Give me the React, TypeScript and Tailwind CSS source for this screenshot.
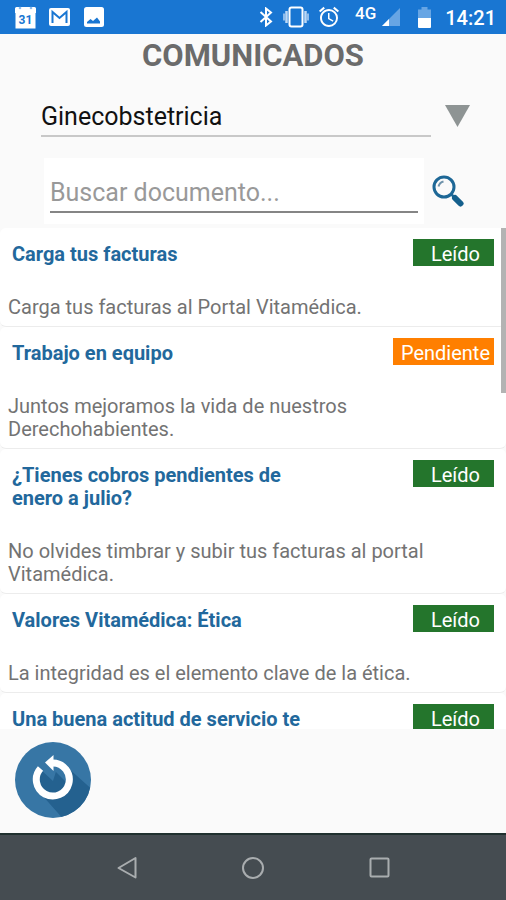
import { useState } from "react";
import { MdAlarm } from "react-icons/md";

type Status = "Leído" | "Pendiente";

type Notice = {
  title: string;
  body?: string;
  status: Status;
};

const notices: Notice[] = [
  {
    title: "Carga tus facturas",
    body: "Carga tus facturas al Portal Vitamédica.",
    status: "Leído",
  },
  {
    title: "Trabajo en equipo",
    body: "Juntos mejoramos la vida de nuestros Derechohabientes.",
    status: "Pendiente",
  },
  {
    title: "¿Tienes cobros pendientes de enero a julio?",
    body: "No olvides timbrar y subir tus facturas al portal Vitamédica.",
    status: "Leído",
  },
  {
    title: "Valores Vitamédica: Ética",
    body: "La integridad es el elemento clave de la ética.",
    status: "Leído",
  },
  { title: "Una buena actitud de servicio te", status: "Leído" },
];

const badgeColor: Record<Status, string> = {
  Leído: "bg-[#24752c]",
  Pendiente: "bg-[#ff7f00]",
};

function StatusBar() {
  return (
    <div className="flex h-[34px] shrink-0 items-center justify-between bg-[#1976d2] pr-2.5 pl-3.5 text-white">
      <div className="flex items-center gap-3">
        <svg viewBox="0 0 23 24" className="h-6 w-[23px]" aria-hidden="true">
          <path d="M1 3.500Q1 2 2.500 2H20.500Q22 2 22 3.500V8H21.500V23.500H1.500V8H1Z" fill="#fff" />
          <circle cx="6" cy="3" r="1.300" fill="#8fbdec" />
          <circle cx="17" cy="3" r="1.300" fill="#8fbdec" />
          <text x="11.500" y="18.500" textAnchor="middle" fontSize="12" fontWeight="700" fill="#1976d2">
            31
          </text>
        </svg>
        <svg viewBox="0 0 21 18" className="h-[18px] w-[21px]" aria-hidden="true">
          <rect width="21" height="18" rx="2" fill="#fff" />
          <path d="M3.500 15V4L10.500 10L17.500 4V15" fill="none" stroke="#1976d2" strokeWidth="2" />
        </svg>
        <svg viewBox="0 0 20 20" className="ml-0.5 size-5" aria-hidden="true">
          <rect width="20" height="20" rx="2.500" fill="#fff" />
          <path d="M3 16.500V15L6.500 12L9 14L13 10.500L16 14.500V16.500Z" fill="#1976d2" />
        </svg>
      </div>

      <div className="flex items-center">
        <svg viewBox="0 0 14 20" className="h-5 w-3.5" fill="none" stroke="#fff" strokeWidth="2" aria-hidden="true">
          <path d="M1.500 5L12 14.500L7 18.500V1.500L12 5.500L1.500 15" />
        </svg>
        <svg viewBox="0 0 26 22" className="ml-2.5 h-[22px] w-[26px]" aria-hidden="true">
          <rect x="6.500" y="1.500" width="13" height="19" rx="2" fill="none" stroke="#fff" strokeWidth="2" />
          <path d="M3.500 5V17M22.500 5V17" stroke="#bcd8f5" strokeWidth="2.500" />
          <path d="M1 7.500V14.500M25 7.500V14.500" stroke="#8fbdec" strokeWidth="2" />
        </svg>
        <MdAlarm className="ml-2 size-6" aria-hidden="true" />
        <span className="mb-2 ml-3.5 text-[17px] leading-4 font-medium">4G</span>
        <svg viewBox="0 0 18 18" className="ml-1.5 h-[18px] w-[18px]" aria-hidden="true">
          <path d="M18 0V18H0Z" fill="#67a5e4" />
          <path d="M7 11V18H0Z" fill="#fff" />
        </svg>
        <svg viewBox="0 0 13 21" className="ml-[18px] h-[21px] w-[13px]" aria-hidden="true">
          <path d="M3.500 0H9.500V2.500H13V11H0V2.500H3.500Z" fill="#67a5e4" />
          <path d="M0 11H13V20Q13 21 12 21H1Q0 21 0 20Z" fill="#fff" />
        </svg>
        <time className="mt-0.5 ml-3.5 text-xl leading-6 font-medium">14:21</time>
      </div>
    </div>
  );
}

function NoticeCard({ notice }: { notice: Notice }) {
  return (
    <li className="rounded-md border-b border-[#ececec] bg-white px-2 pt-[11px] pb-[7px]">
      <div className="flex items-start justify-between pr-1 pl-1">
        <h2 className="w-3/5 pt-1 text-xl leading-[23px] font-bold text-[#22689c]">
          {notice.title}
        </h2>
        <span
          className={`min-w-[81px] pt-[3px] pr-1 pl-2 text-center text-xl leading-6 text-white ${badgeColor[notice.status]}`}
        >
          {notice.status}
        </span>
      </div>
      <p className="mt-[30px] min-h-[23px] text-xl leading-[23px] text-[#737373]">{notice.body}</p>
    </li>
  );
}

function NavBar() {
  return (
    <nav className="flex h-[67px] shrink-0 items-center justify-center gap-[102px] border-t-2 border-[#20302f] bg-[#454c51]">
      <button type="button" aria-label="Atrás">
        <svg viewBox="0 0 24 24" className="size-6" fill="none" stroke="#a9adaf" strokeWidth="2" strokeLinejoin="round">
          <path d="M20.500 2V21.500L3.500 12Z" />
        </svg>
      </button>
      <button type="button" aria-label="Inicio">
        <svg viewBox="0 0 24 24" className="size-6" fill="none" stroke="#a9adaf" strokeWidth="2">
          <circle cx="12" cy="12" r="10" />
        </svg>
      </button>
      <button type="button" aria-label="Recientes">
        <svg viewBox="0 0 24 24" className="size-6" fill="none" stroke="#a9adaf" strokeWidth="2">
          <rect x="3.500" y="2.500" width="18" height="18" rx="1" />
        </svg>
      </button>
    </nav>
  );
}

export default function App() {
  const [query, setQuery] = useState("");

  return (
    <div className="flex h-screen flex-col bg-[#fafafa] font-[Roboto,sans-serif]">
      <StatusBar />

      <header className="shrink-0 pb-1">
        <h1 className="pt-1 text-center text-[31px] leading-9 font-bold text-[#6b6b6b]">COMUNICADOS</h1>

        <div className="mt-5 flex items-center pr-9 pl-[41px]">
          <select
            aria-label="Especialidad"
            className="h-[43px] min-w-0 flex-1 appearance-none border-b-2 border-[#c8c8c8] pt-1 text-[25px] leading-8 text-[#111111] outline-none"
          >
            <option>Ginecobstetricia</option>
          </select>
          <svg viewBox="0 0 25 22" className="ml-3.5 h-[22px] w-[25px]" aria-hidden="true">
            <path d="M0 0H25L12.500 22Z" fill="#8e9494" />
          </svg>
        </div>

        <form
          className="mt-[21px] flex items-center pr-[42px] pl-11"
          onSubmit={(e) => e.preventDefault()}
        >
          <div className="min-w-0 flex-1 bg-white px-1.5 pt-3 pb-[11px]">
            <input
              type="text"
              aria-label="Buscar documento"
              placeholder="Buscar documento..."
              value={query}
              onChange={(e) => setQuery(e.target.value)}
              className="h-[43px] w-full border-b-2 border-[#858585] pt-1 text-[25px] leading-8 text-[#111111] outline-none placeholder:text-[#999999]"
            />
          </div>
          <button type="submit" aria-label="Buscar" className="ml-2">
            <svg viewBox="0 0 32 32" className="size-8" fill="none">
              <circle cx="12" cy="12" r="10" stroke="#1d6796" strokeWidth="3" />
              <path d="M6.500 11.500Q7.500 7.500 11.500 6.500" stroke="#6f93ab" strokeWidth="2" />
              <path d="M19 19L22 22" stroke="#1d6796" strokeWidth="2.500" />
              <path d="M23 23L28.500 28.500" stroke="#145f8c" strokeWidth="6" strokeLinecap="round" />
            </svg>
          </button>
        </form>
      </header>

      <main className="relative min-h-0 flex-1">
        <ul className="h-full overflow-y-auto [scrollbar-width:none]">
          {notices.map((notice) => (
            <NoticeCard key={notice.title} notice={notice} />
          ))}
        </ul>
        <div className="absolute top-0 right-0 h-[33%] w-[5px] bg-[#b3b3b3]" />
      </main>

      <footer className="shrink-0 px-3.5 pt-3 pb-3.5">
        <button type="button" aria-label="Actualizar" className="block">
          <svg viewBox="0 0 78 78" className="size-[78px]">
            <defs>
              <clipPath id="disc">
                <circle cx="39" cy="39" r="38" />
              </clipPath>
            </defs>
            <circle cx="39" cy="39" r="38" fill="#3776a5" />
            <path d="M53 26L90 59V90H60L27 53L20 39L26 28L39 40L44 24Z" fill="#24618f" clipPath="url(#disc)" />
            <path d="M36 25L56 45V30L44 23Z" fill="#3776a5" />
            <path d="M26.500 27.500A16.500 16.500 0 1 0 39 22" fill="none" stroke="#fff" strokeWidth="7" />
            <path d="M31 21.500L39.500 14V30Z" fill="#fff" />
          </svg>
        </button>
      </footer>

      <NavBar />
    </div>
  );
}
